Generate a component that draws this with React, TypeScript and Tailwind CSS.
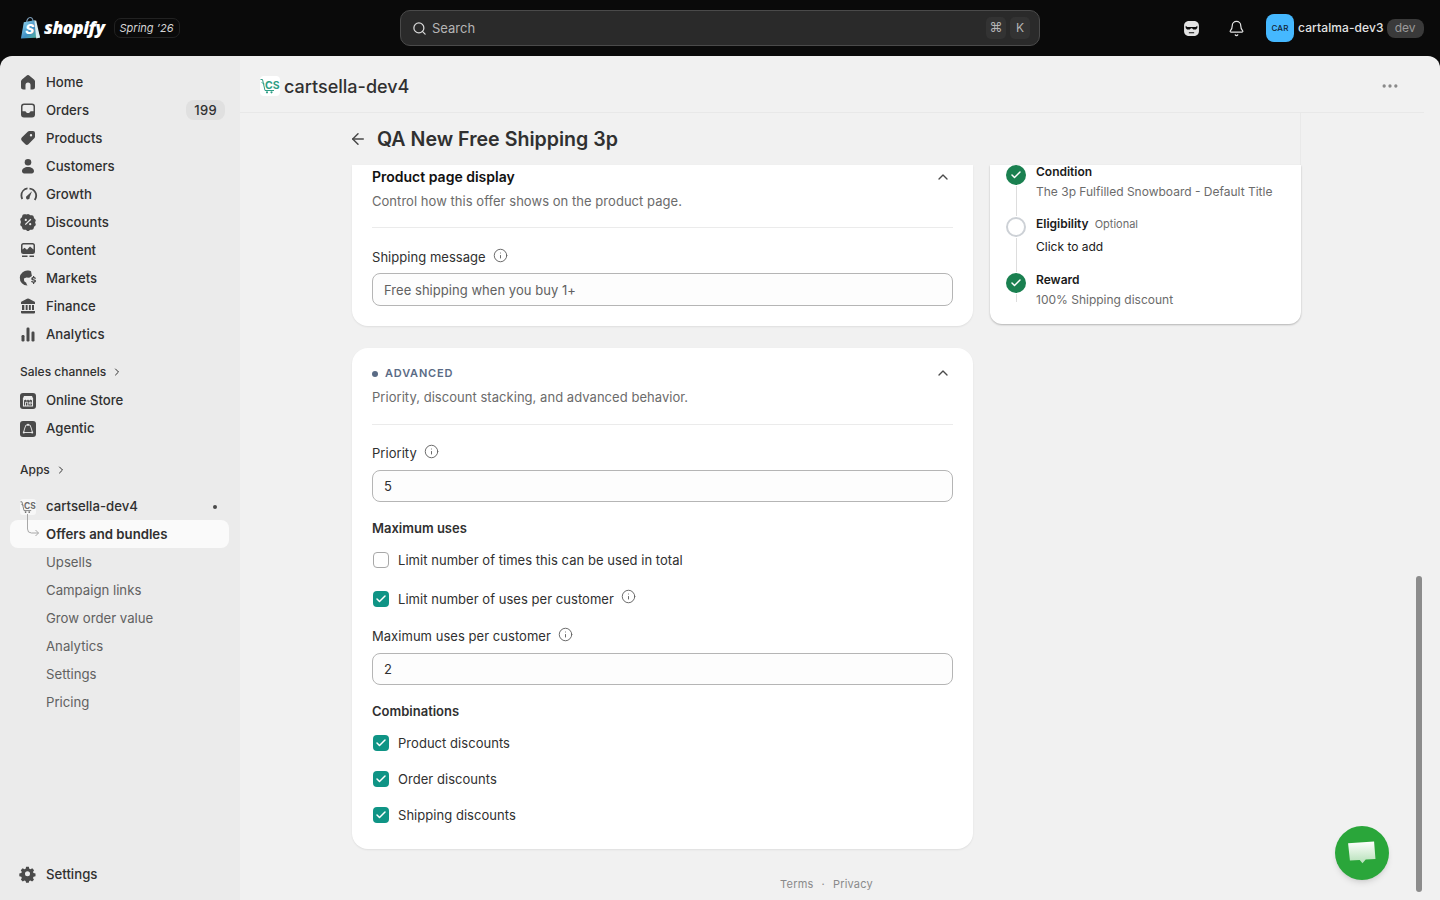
import { ArrowLeft, Bell, Check, ChevronRight, ChevronUp, Ellipsis, Info, Search } from 'lucide-react'
import type { ReactNode } from 'react'

const font = { fontFamily: 'Inter, "Liberation Sans", sans-serif' }

function Glyph({ children }: { children: ReactNode }) {
  return (
    <svg viewBox="0 0 20 20" className="h-5 w-5 shrink-0 text-[#4a4a4a]" fill="currentColor">
      {children}
    </svg>
  )
}

const icons: Record<string, ReactNode> = {
  home: <path d="M10.9 3.3a1.4 1.4 0 0 0-1.8 0L4 7.6a2.5 2.5 0 0 0-1 2V15a2.5 2.5 0 0 0 2.500 2.500h2V13a2.500 2.500 0 0 1 5 0v4.500h2A2.500 2.500 0 0 0 17 15V9.600a2.500 2.500 0 0 0-1-2z" />,
  orders: <path fillRule="evenodd" d="M6 3.500h8A3 3 0 0 1 17 6.500v8a3 3 0 0 1-3 3H6a3 3 0 0 1-3-3v-8a3 3 0 0 1 3-3zm0 1.500A1.500 1.500 0 0 0 4.500 6.500v4.700h3c.4 1.200 1.300 1.800 2.500 1.800s2.100-.6 2.500-1.800h3V6.500A1.500 1.500 0 0 0 14 5z" />,
  products: <path fillRule="evenodd" d="M11.500 3H15a2 2 0 0 1 2 2v3.500a2.500 2.500 0 0 1-.7 1.800l-5.900 5.900a2.200 2.200 0 0 1-3.100 0l-3.500-3.500a2.200 2.200 0 0 1 0-3.100l5.900-5.900A2.500 2.500 0 0 1 11.500 3zm1.500 3a1.200 1.200 0 1 0 0 2.400A1.200 1.200 0 0 0 13 6z" />,
  customers: (
    <>
      <circle cx="10" cy="6.300" r="3.300" />
      <path d="M10 11c-3.500 0-6 1.700-6 4.300 0 1.200.9 2.200 2.200 2.200h7.600c1.300 0 2.200-1 2.200-2.200C16 12.700 13.500 11 10 11z" />
    </>
  ),
  growth: (
    <>
      <path d="M9.500 3.600v1.700a6.200 6.200 0 0 0-5.200 6.200c0 1.100.3 2.200.8 3.100l-1.500 1a8 8 0 0 1-1.100-4.100 8 8 0 0 1 7-7.900z" />
      <path d="M11.500 3.700a8 8 0 0 1 6 12.700l-1.500-1a6.200 6.200 0 0 0-4.500-9.900z" />
      <path d="M14 7.300l-2.300 5.600a1.900 1.900 0 1 1-2.600-1.200z" />
    </>
  ),
  discounts: <path fillRule="evenodd" d="M8.700 2.500a2 2 0 0 1 2.600 0l1 .8 1.300-.1a2 2 0 0 1 2.200 1.700l.2 1.300 1 .8a2 2 0 0 1 .5 2.600L17 10l.5 1.400a2 2 0 0 1-.5 2.600l-1 .8-.2 1.300a2 2 0 0 1-2.200 1.700l-1.300-.1-1 .8a2 2 0 0 1-2.600 0l-1-.8-1.300.1a2 2 0 0 1-2.200-1.700l-.2-1.300-1-.8a2 2 0 0 1-.5-2.600L3 10l-.5-1.400A2 2 0 0 1 3 6l1-.8.2-1.300a2 2 0 0 1 2.200-1.700l1.300.1zM12.400 6.800L6.800 12.200l.9.900 5.600-5.400zM7.800 6.800a1.100 1.100 0 1 0 0 2.200 1.100 1.100 0 0 0 0-2.200zm4.400 4.300a1.100 1.100 0 1 0 0 2.200 1.100 1.100 0 0 0 0-2.200z" />,
  content: (
    <>
      <path fillRule="evenodd" d="M5.500 3h9A2.500 2.500 0 0 1 17 5.500v6a2.500 2.500 0 0 1-2.500 2.500h-9A2.500 2.500 0 0 1 3 11.500v-6A2.500 2.500 0 0 1 5.500 3zm0 1.500a1 1 0 0 0-1 1v4l2-1.800 2.500 2 3-3.200 3.500 3V5.500a1 1 0 0 0-1-1z" />
      <path d="M4 15.500h5.500V17H4zM11.500 15.500H16V17h-4.500z" />
    </>
  ),
  markets: (
    <>
      <path d="M10.500 2.600a7.500 7.500 0 1 0-1 14.900c-.6-.9-1.100-1.700-1.300-2.800l-2-1.500-.3-2.800 2.500-1 2.800.4 2.700-1.700L13 3.200c-.8-.4-1.600-.6-2.500-.6z" />
      <path d="M16.200 8.100v1c1 .2 1.700.8 1.800 1.600h-1.400c-.1-.3-.4-.5-.9-.5s-.8.200-.8.500c0 .8 3.200.2 3.200 2.400 0 .9-.7 1.500-1.900 1.700v1.100h-1.200v-1.100c-1.100-.2-1.800-.8-1.900-1.800h1.400c.1.400.5.600 1.100.6.500 0 .9-.2.900-.5 0-.9-3.200-.3-3.200-2.400 0-.9.700-1.400 1.700-1.600v-1z" />
    </>
  ),
  finance: (
    <>
      <path d="M9 2.800a2 2 0 0 1 2 0l5.200 2.800a1 1 0 0 1 .8 1V8H3V6.600a1 1 0 0 1 .8-1z" />
      <path d="M4 9h2.300v5H4zM7.700 9h1.900v5H7.700zM10.900 9h1.900v5h-1.900zM14 9h2v5h-2zM3 15h14v1.500a1 1 0 0 1-1 1H4a1 1 0 0 1-1-1z" />
    </>
  ),
  analytics: (
    <>
      <rect x="3.500" y="11" width="3" height="6.500" rx="1.200" />
      <rect x="8.500" y="3.500" width="3" height="14" rx="1.200" />
      <rect x="13.500" y="7.500" width="3" height="10" rx="1.200" />
    </>
  ),
  settings: <path fillRule="evenodd" d="M8.500 2.500h3l.5 2.200 1.300.6 2-1.100 2 2.100-1.200 1.900.6 1.300 2.200.6v3l-2.200.5-.6 1.300 1.100 2-2.100 2-1.900-1.200-1.300.6-.5 2.100h-3l-.5-2.100-1.300-.6-1.900 1.100-2.100-2 1.100-1.900-.6-1.300-2.200-.5v-3l2.200-.6.6-1.300-1.200-1.900 2.100-2.100 2 1.100 1.300-.6zM10 7.500a2.800 2.800 0 1 0 0 5.600 2.800 2.800 0 0 0 0-5.600z" transform="translate(.5 .5) scale(.9)" />,
}

function NavRow({ label, icon, badge }: { label: string; icon: string; badge?: string }) {
  return (
    <div className="flex h-7 items-center gap-2 rounded-lg pr-[4px] pl-[8px] text-[#303030]">
      <Glyph>{icons[icon]}</Glyph>
      <span className="flex-1 pt-px text-[13.200px] font-medium">{label}</span>
      {badge && (
        <span className="rounded-[8px] bg-[#e0e0e0] px-[8px] text-[13px] leading-5 font-medium tracking-wide">{badge}</span>
      )}
    </div>
  )
}

function DarkTile({ kind }: { kind: 'store' | 'agentic' }) {
  return (
    <svg viewBox="0 0 16 16" className="h-4 w-4 shrink-0">
      <rect width="16" height="16" rx="3" fill="#4a4a4a" />
      {kind === 'store' ? (
        <>
          <path d="M3.500 6.800V13h9V6.800" fill="none" stroke="#ebebeb" strokeWidth="1.100" />
          <path d="M4 3h8l1.300 3a1.500 1.500 0 0 1-2.700.6 1.600 1.600 0 0 1-2.600 0 1.600 1.600 0 0 1-2.600 0A1.500 1.500 0 0 1 2.700 6z" fill="#ebebeb" />
          <path d="M5.500 13V9.200h2.300V13M9.300 9.200h1.800v1.800H9.300z" fill="none" stroke="#ebebeb" strokeWidth=".9" />
        </>
      ) : (
        <>
          <path d="M6 4h4l1.200 3 1.300 4.500H3.500L4.800 7z" fill="none" stroke="#ebebeb" strokeWidth=".9" />
          <circle cx="3.800" cy="11.500" r="1" fill="#ebebeb" />
          <circle cx="12.200" cy="11.500" r="1" fill="#ebebeb" />
          <circle cx="8" cy="3.800" r="1" fill="#ebebeb" />
        </>
      )}
    </svg>
  )
}

function CsLogo({ color }: { color: string }) {
  return (
    <svg viewBox="0 0 20 20" className="h-full w-full">
      <path d="M.5 3.500h2l2.500 11h9" fill="none" stroke={color} strokeWidth="1" />
      <path d="M1.500 6.500l3 1.500" fill="none" stroke={color} strokeWidth=".8" />
      <circle cx="7" cy="16.300" r="1.100" fill={color} />
      <circle cx="11.500" cy="16.300" r="1.100" fill={color} />
      <text x="5" y="12.500" fontSize="10.500" fontWeight="700" fill={color} style={font}>
        CS
      </text>
    </svg>
  )
}

function Sidebar() {
  return (
    <aside className="flex w-60 shrink-0 flex-col justify-between bg-[#ebebeb] pt-3 pb-3">
      <div className="pr-[11px] pl-[10px]">
        <NavRow label="Home" icon="home" />
        <NavRow label="Orders" icon="orders" badge="199" />
        <NavRow label="Products" icon="products" />
        <NavRow label="Customers" icon="customers" />
        <NavRow label="Growth" icon="growth" />
        <NavRow label="Discounts" icon="discounts" />
        <NavRow label="Content" icon="content" />
        <NavRow label="Markets" icon="markets" />
        <NavRow label="Finance" icon="finance" />
        <NavRow label="Analytics" icon="analytics" />

        <div className="mt-[10px] flex h-7 items-center gap-[5px] pl-[10px] text-xs font-medium text-[#303030]">
          Sales channels <ChevronRight className="h-3 w-3" />
        </div>
        <div className="flex h-7 items-center gap-[10px] pt-px pl-[10px] text-[13.200px] font-medium text-[#303030]">
          <DarkTile kind="store" /> Online Store
        </div>
        <div className="flex h-7 items-center gap-[10px] pt-px pl-[10px] text-[13.200px] font-medium text-[#303030]">
          <DarkTile kind="agentic" /> Agentic
        </div>

        <div className="mt-[14px] flex h-7 items-center gap-[5px] pl-[10px] text-xs font-medium text-[#303030]">
          Apps <ChevronRight className="h-3 w-3" />
        </div>
        <div className="mt-[8px] flex h-7 items-center gap-[10px] pt-px pl-[10px] text-[13.200px] font-medium text-[#303030]">
          <span className="h-4 w-4 rounded-[3px] bg-[#f7f7f7]">
            <CsLogo color="#6b6b6b" />
          </span>
          <span className="flex-1">cartsella-dev4</span>
          <span className="mr-[12px] h-1 w-1 rounded-full bg-[#4a4a4a]" />
        </div>
        <div className="relative flex h-7 items-center rounded-lg bg-[#fafafa] pt-px pl-9 text-[13.200px] font-semibold text-[#303030]">
          <svg viewBox="0 0 14 24" className="absolute top-[-6px] left-[16px] h-6 w-[14px]" fill="none" stroke="#a8a8a8">
            <path d="M1.500 0v15a4 4 0 0 0 4 4h7M9.500 16l3 3-3 3" />
          </svg>
          Offers and bundles
        </div>
        {['Upsells', 'Campaign links', 'Grow order value', 'Analytics', 'Settings', 'Pricing'].map((item) => (
          <div key={item} className="flex h-7 items-center pt-px pl-9 text-[13.200px] text-[#616161]">
            {item}
          </div>
        ))}
      </div>
      <div className="pr-[11px] pl-[10px]">
        <NavRow label="Settings" icon="settings" />
      </div>
    </aside>
  )
}

function TopBar() {
  return (
    <header className="flex h-14 shrink-0 items-center bg-[#0a0a0a]">
      <div className="flex w-[400px] items-center pl-[20px]">
        <svg viewBox="0 0 22 24" className="h-6 w-[21px] shrink-0">
          <defs>
            <linearGradient id="bag" x1="0" y1="0" x2="1" y2="1">
              <stop offset="0" stopColor="#9ddcf0" />
              <stop offset="0.55" stopColor="#3f8fc4" />
              <stop offset="1" stopColor="#5fc08f" />
            </linearGradient>
          </defs>
          <path d="M7 6c0-3 2-5 3.500-5 2 0 3 2 3.200 4" fill="none" stroke="#7a9ab5" strokeWidth="1.200" />
          <path d="M4 6l11-2 6 18-20 1z" fill="url(#bag)" />
          <path d="M15 4l2 .5 4 17.500-4 1z" fill="#d9eef2" />
          <text x="5.500" y="18.500" fontSize="14" fontWeight="800" fontStyle="italic" fill="#fff" style={font}>
            S
          </text>
        </svg>
        <span
          className="ml-[3px] text-[17.500px] leading-none font-extrabold tracking-[-0.4px] text-white italic"
          style={{ fontFamily: '"Open Sans", sans-serif' }}
        >
          shopify
        </span>
        <span className="ml-[9px] flex h-5 w-[66px] items-center justify-center rounded-[7px] border border-[#222] text-[11px] text-[#d4d4d4] italic">
          Spring ’26
        </span>
      </div>
      <div className="flex h-9 w-[640px] items-center rounded-[10px] border border-[#4a4a4a] bg-[#2a2a2a] pr-[9px] pl-[11px]">
        <Search className="h-[15px] w-[15px] text-[#d8d8d8]" strokeWidth={2} />
        <span className="ml-[5px] flex-1 pt-px text-[13px] text-[#b5b5b5]">Search</span>
        <span className="flex h-[22px] w-5 items-center justify-center rounded-[5px] bg-[#333] text-[13px] text-[#b5b5b5]">⌘</span>
        <span className="ml-1 flex h-[22px] w-5 items-center justify-center rounded-[5px] bg-[#333] text-xs text-[#b5b5b5]">K</span>
      </div>
      <div className="flex flex-1 items-center pl-[143px]">
        <svg viewBox="0 0 16 16" className="h-[17px] w-[17px] text-[#e3e3e3]" fill="currentColor">
          <path fillRule="evenodd" d="M6 1h4c3 0 5 1.800 5 4.500v5C15 13.200 13 15 10 15H6c-3 0-5-1.800-5-4.500v-5C1 2.800 3 1 6 1zM2.500 5.500v2l1.300 1.500h2.500l1.200-1.200h1L9.700 9h2.500l1.300-1.500v-2L12 6.500H4zM5.500 11.500v1h5v-1z" />
        </svg>
        <Bell className="ml-[28px] h-[17px] w-[17px] text-[#e3e3e3]" strokeWidth={1.700} />
        <span className="ml-[21px] flex h-7 w-7 items-center justify-center rounded-lg bg-[#45b8ff] text-[8px] font-medium tracking-wide text-[#123]">
          CAR
        </span>
        <span className="ml-1 text-xs font-medium tracking-[0.1px] text-[#e3e3e3]">cartalma-dev3</span>
        <span className="ml-[3px] flex h-[19px] w-[37px] items-center justify-center rounded-lg bg-[#3a3a3a] text-xs text-[#9a9a9a]">
          dev
        </span>
      </div>
    </header>
  )
}

function Field({ value }: { value: string }) {
  return (
    <input
      readOnly
      value={value}
      className="block h-8 w-full rounded-lg border border-[#b5b5b5] bg-[#fdfdfd] px-[11px] text-[13px] text-[#303030]"
      style={font}
    />
  )
}

function InfoDot() {
  return <Info className="mb-[5px] ml-[7px] h-[15px] w-[15px] text-[#616161]" strokeWidth={1.500} />
}

function Tick({ label, checked = true, hint }: { label: string; checked?: boolean; hint?: boolean }) {
  return (
    <div className="flex h-5 items-center pl-px text-[13px] tracking-[0.04px] text-[#303030]">
      {checked ? (
        <span className="flex h-4 w-4 items-center justify-center rounded-[4px] bg-[#0f9485] text-white">
          <Check className="h-3 w-3" strokeWidth={3} />
        </span>
      ) : (
        <span className="h-4 w-4 rounded-[4px] border border-[#a8a8a8] bg-white" />
      )}
      <span className="ml-[9px] pt-px">{label}</span>
      {hint && <InfoDot />}
    </div>
  )
}

function Step({ title, extra, line, done, height, muted, fade }: { title: string; extra?: string; line: string; done: boolean; height: string; muted?: boolean; fade?: boolean }) {
  return (
    <div className={`flex gap-[10px] ${height}`}>
      <div className="flex w-5 flex-col items-center">
        {done ? (
          <span className="flex h-5 w-5 items-center justify-center rounded-full bg-[#1a8050] text-white">
            <Check className="h-3 w-3" strokeWidth={3} />
          </span>
        ) : (
          <span className="h-5 w-5 rounded-full border-2 border-[#cdd1d6] bg-white" />
        )}
        <span className={`w-px ${fade ? 'h-2' : 'flex-1'} my-[1px] bg-[#dddddd]`} />
      </div>
      <div className="-mt-[3px]">
        <div className="flex h-5 items-center gap-[6px]">
          <span className="text-xs font-semibold text-[#1a1a1a]">{title}</span>
          {extra && <span className="text-[11px] text-[#6b6b6b]">{extra}</span>}
        </div>
        <p className={`text-xs leading-5 ${muted ? 'mt-[3px] text-[#1a1a1a]' : 'text-[#6b6b6b]'}`}>{line}</p>
      </div>
    </div>
  )
}

function FieldLabel({ children, spacing }: { children: ReactNode; spacing: string }) {
  return <div className={`flex h-5 items-center pt-px text-[13px] tracking-[0.04px] text-[#303030] ${spacing}`}>{children}</div>
}

export default function App() {
  return (
    <div className="flex h-[900px] w-[1440px] flex-col overflow-hidden bg-[#0a0a0a]" style={font}>
      <TopBar />
      <div className="relative flex min-h-0 flex-1 overflow-hidden rounded-t-xl">
        <Sidebar />
        <main className="flex min-w-0 flex-1 flex-col bg-[#f1f1f1]">
          <div className="mr-4 flex h-[57px] shrink-0 items-center border-b border-[#e8e8e8] pt-1 pr-[24px] pl-[20px]">
            <span className="h-5 w-5 rounded-[4px] bg-white">
              <CsLogo color="#2f9e86" />
            </span>
            <h1 className="ml-1 flex-1 text-[18px] font-medium text-[#303030]">cartsella-dev4</h1>
            <Ellipsis className="h-5 w-5 text-[#8a8a8a]" />
          </div>
          <div className="ml-[112px] flex h-[52px] w-[949px] shrink-0 items-center border-r border-[#e9e9e9]">
            <ArrowLeft className="-ml-[3px] h-[18px] w-[18px] text-[#4a4a4a]" />
            <h2 className="ml-[10px] pt-px text-[19.600px] font-semibold text-[#303030]">QA New Free Shipping 3p</h2>
          </div>
          <div className="ml-[112px] w-[949px]">
            <div className="flex gap-[17px]">
              <div className="w-[621px]">
                <section className="rounded-b-2xl bg-white px-5 pt-[2px] pb-5 shadow-[0_1px_2px_rgba(0,0,0,0.08)]">
                  <div className="flex h-5 items-center justify-between">
                    <h3 className="text-sm font-semibold text-[#111]">Product page display</h3>
                    <ChevronUp className="mr-[2px] h-4 w-4 text-[#4a4a4a]" />
                  </div>
                  <p className="mt-1 text-[13px] leading-5 tracking-[0.04px] text-[#6b6b6b]">Control how this offer shows on the product page.</p>
                  <div className="mt-4 h-px bg-[#ebebeb]" />
                  <FieldLabel spacing="mt-[19px]">
                    Shipping message <InfoDot />
                  </FieldLabel>
                  <div className="mt-[6px]">
                    <input
                      readOnly
                      value="Free shipping when you buy 1+"
                      className="block h-[33px] w-full rounded-lg border border-[#b5b5b5] bg-[#fdfdfd] px-[11px] text-[13px] tracking-[0.04px] text-[#616161]"
                      style={font}
                    />
                  </div>
                </section>

                <section className="mt-[22px] rounded-2xl bg-white px-5 pt-[15px] pb-6 shadow-[0_1px_2px_rgba(0,0,0,0.08)]">
                  <div className="flex h-5 items-center justify-between">
                    <div className="flex items-center gap-[7px] pt-px text-[11px] font-semibold tracking-[0.8px] text-[#5a6b85]">
                      <span className="h-[6px] w-[6px] rounded-full bg-[#5a6b85]" /> ADVANCED
                    </div>
                    <ChevronUp className="mr-[2px] h-4 w-4 text-[#4a4a4a]" />
                  </div>
                  <p className="mt-1 text-[13px] leading-5 tracking-[0.04px] text-[#6b6b6b]">Priority, discount stacking, and advanced behavior.</p>
                  <div className="mt-[17px] h-px bg-[#ebebeb]" />
                  <FieldLabel spacing="mt-[18px]">
                    Priority <InfoDot />
                  </FieldLabel>
                  <div className="mt-[7px]">
                    <Field value="5" />
                  </div>
                  <h4 className="mt-4 text-[13px] leading-5 font-semibold text-[#303030]">Maximum uses</h4>
                  <div className="mt-3">
                    <Tick label="Limit number of times this can be used in total" checked={false} />
                  </div>
                  <div className="mt-[19px]">
                    <Tick label="Limit number of uses per customer" hint />
                  </div>
                  <FieldLabel spacing="mt-[17px]">
                    Maximum uses per customer <InfoDot />
                  </FieldLabel>
                  <div className="mt-[7px]">
                    <Field value="2" />
                  </div>
                  <h4 className="mt-4 text-[13px] leading-5 font-semibold text-[#303030]">Combinations</h4>
                  <div className="mt-3 flex flex-col gap-4">
                    <Tick label="Product discounts" />
                    <Tick label="Order discounts" />
                    <Tick label="Shipping discounts" />
                  </div>
                </section>
              </div>

              <aside className="h-[159px] w-[311px] overflow-hidden rounded-b-xl bg-white px-4 shadow-[0_1px_2px_rgba(0,0,0,0.25)]">
                <Step title="Condition" line="The 3p Fulfilled Snowboard - Default Title" done height="h-[52px]" />
                <Step title="Eligibility" extra="Optional" line="Click to add" done={false} height="h-[56px]" muted />
                <Step title="Reward" line="100% Shipping discount" done height="h-[51px]" fade />
              </aside>
            </div>
            <div className="mt-[27px] flex h-4 items-center justify-center gap-2 text-[11px] tracking-[0.2px] text-[#8a8a8a]">
              <span>Terms</span>
              <span>·</span>
              <span>Privacy</span>
            </div>
          </div>
        </main>

        {/* scroll thumb and chat bubble sit on top of the page */}
        <div className="absolute top-[520px] left-[1416px] h-[316px] w-[6px] rounded-full bg-[#8c8c8c]" />
        <div className="absolute top-[770px] left-[1335px] flex h-[54px] w-[54px] items-center justify-center rounded-full bg-[#2aa63a] shadow-md">
          <svg viewBox="0 0 32 28" className="h-[26px] w-[30px]">
            <defs>
              <linearGradient id="chat" x1="0" y1="0" x2="0" y2="1">
                <stop offset="0" stopColor="#ffffff" />
                <stop offset="1" stopColor="#b5e0b8" />
              </linearGradient>
            </defs>
            <path d="M1 3.500l28-2 1.500 19-10.500.500-3.500 4-3-3.500L3 22z" fill="url(#chat)" />
          </svg>
        </div>
      </div>
    </div>
  )
}
